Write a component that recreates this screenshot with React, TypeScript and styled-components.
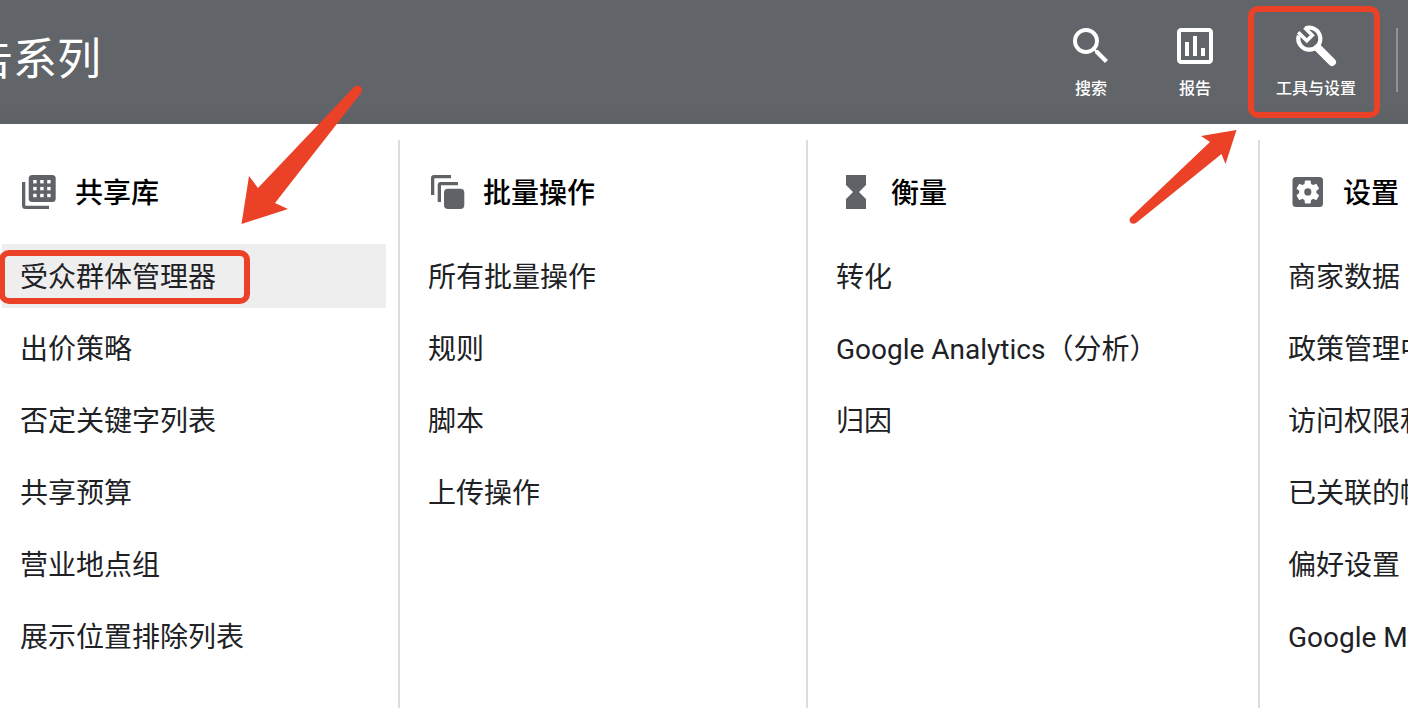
import React from 'react';
import styled, { createGlobalStyle } from 'styled-components';

const GlobalStyle = createGlobalStyle`
  * { box-sizing: border-box; }
  body {
    margin: 0;
    overflow: hidden;
    background: #fff;
    font-family: Roboto, "Noto Sans CJK SC", sans-serif;
  }
`;

const RED = '#eb4126';
const GREY = '#5f6368';

const Page = styled.div`
  position: relative;
  display: flex;
  flex-direction: column;
  min-height: 100vh;
  overflow: hidden;
`;

const Header = styled.header`
  display: flex;
  align-items: center;
  justify-content: space-between;
  height: 124px;
  padding-right: 10px;
  background: linear-gradient(#616469 85%, #5d6164);
  color: #fff;
`;

const Title = styled.h1`
  margin: 0 0 4px -31px;
  font-size: 44px;
  line-height: 64px;
  font-weight: 400;
  white-space: nowrap;
`;

const Tools = styled.nav`
  display: flex;
  align-items: center;
  height: 100%;
`;

const ToolButton = styled.button<{ $wide?: boolean }>`
  position: relative;
  display: flex;
  flex-direction: column;
  align-items: center;
  gap: 4px;
  width: ${(p) => (p.$wide ? 138 : 104)}px;
  height: 100%;
  padding: 22px 0 0;
  border: 0;
  background: none;
  color: inherit;
  font: inherit;
  font-size: 16px;
  line-height: 30px;
  font-weight: 500;
  cursor: pointer;
`;

const Divider = styled.span`
  width: 2px;
  height: 64px;
  margin: 0 0 4px 11px;
  background: #919396;
`;

const Callout = styled.span<{ $inset: string }>`
  position: absolute;
  inset: ${(p) => p.$inset};
  border: 6px solid ${RED};
  border-radius: 10px;
  pointer-events: none;
`;

const Menu = styled.main`
  display: grid;
  flex: 1;
  grid-template-columns: minmax(0, 408fr) minmax(0, 408fr) minmax(0, 452fr) minmax(0, 148fr);
  margin-left: -8px;
  padding-top: 16px;
`;

const Column = styled.section`
  padding: 20px 12px 0 10px;
  border-right: 2px solid #dadce0;
  white-space: nowrap;

  &:last-child {
    border-right: 0;
  }
`;

const Heading = styled.h2`
  display: flex;
  align-items: center;
  gap: 17px;
  height: 64px;
  margin: 0 0 20px;
  padding-left: 16px;
  color: #000;
  font-size: 28px;
  line-height: 40px;
  font-weight: 500;
`;

const HeadingText = styled.span`
  padding-top: 4px;
`;

const List = styled.ul`
  display: flex;
  flex-direction: column;
  gap: 8px;
  margin: 0;
  padding: 0;
  list-style: none;
`;

const Item = styled.a<{ $active?: boolean }>`
  display: flex;
  height: 64px;
  padding-left: 18px;
  background: ${(p) => (p.$active ? '#eee' : 'transparent')};
  color: #202124;
  font-size: 28px;
  line-height: 68px;
  text-decoration: none;
`;

const ItemText = styled.span`
  position: relative;
  height: 100%;
`;

const Arrow = styled.svg<{ $left: number; $top: number }>`
  position: absolute;
  left: ${(p) => p.$left}px;
  top: ${(p) => p.$top}px;
  fill: ${RED};
  pointer-events: none;
`;

const HeadingIcon = styled.svg`
  flex: none;
  width: 40px;
  height: 40px;
  fill: ${GREY};
`;

const SearchIcon = () => (
  <svg width="48" height="48" viewBox="0 0 24 24" fill="currentColor" aria-hidden="true">
    <path d="M15.5 14h-.79l-.28-.27A6.471 6.471 0 0 0 16 9.5 6.5 6.5 0 1 0 9.5 16c1.61 0 3.09-.59 4.23-1.57l.27.28v.79l5 4.99L20.49 19l-4.99-5zm-6 0C7.01 14 5 11.99 5 9.5S7.01 5 9.5 5 14 7.01 14 9.5 11.99 14 9.5 14z" />
  </svg>
);

const ReportIcon = () => (
  <svg width="48" height="48" viewBox="0 0 24 24" fill="currentColor" aria-hidden="true">
    <path d="M19 3H5c-1.1 0-2 .9-2 2v14c0 1.1.9 2 2 2h14c1.1 0 2-.9 2-2V5c0-1.1-.9-2-2-2zm0 16H5V5h14v14zM7 10h2v7H7zM11 7h2v10h-2zM15 13h2v4h-2z" />
  </svg>
);

const WrenchIcon = () => (
  <svg width="48" height="48" viewBox="0 0 48 48" fill="none" stroke="currentColor" aria-hidden="true">
    <path d="M13.5 6.4A11 11 0 1 1 6.8 13.5" strokeWidth="4.2" />
    <path d="M6.2 10.2L14.8 18.8L20.3 13.3L12.5 5.5" strokeWidth="3.6" />
    <path d="M26 26L40 40" strokeWidth="8" strokeLinecap="round" />
  </svg>
);

const LibraryIcon = () => (
  <HeadingIcon viewBox="0 0 40 40" aria-hidden="true">
    <path d="M4 10h3.300v23.700h23.700V37H7.500Q4 37 4 33.500z" />
    <rect x="10.700" y="3" width="27" height="27" rx="3.500" />
    {[0, 1, 2].map((r) =>
      [0, 1, 2].map((c) => (
        <rect key={`${r}${c}`} x={15.2 + c * 7} y={8 + r * 6.9} width="3.400" height="3.400" fill="#fff" />
      )),
    )}
  </HeadingIcon>
);

const BulkIcon = () => (
  <HeadingIcon viewBox="0 0 40 40" aria-hidden="true">
    <path d="M5 23V6q0-3 3-3h17v3.300H8.300V23z" />
    <path d="M11.700 30V13q0-3 3-3H32v3.300H15V30z" />
    <rect x="18" y="16.700" width="20.300" height="20.300" rx="4" />
  </HeadingIcon>
);

const HourglassIcon = () => (
  <HeadingIcon viewBox="0 0 40 40" aria-hidden="true">
    <path d="M12 3h20v10l-7 7l7 7v10H12V27l7-7l-7-7z" />
  </HeadingIcon>
);

const SettingsIcon = () => (
  <HeadingIcon viewBox="0 0 40 40" aria-hidden="true">
    <rect x="6.500" y="5" width="30.500" height="30" rx="3.500" />
    <g transform="translate(7.400 5.500) scale(1.2)">
      <path
        fill="#fff"
        d="M19.14 12.94c.04-.3.06-.61.06-.94 0-.32-.02-.64-.07-.94l2.03-1.58c.18-.14.23-.41.12-.61l-1.92-3.32c-.12-.22-.37-.29-.59-.22l-2.39.96c-.5-.38-1.03-.7-1.62-.94l-.36-2.54c-.04-.24-.24-.41-.48-.41h-3.84c-.24 0-.43.17-.47.41l-.36 2.54c-.59.24-1.13.57-1.62.94l-2.39-.96c-.22-.08-.47 0-.59.22L2.74 8.87c-.12.21-.08.47.12.61l2.03 1.58c-.05.3-.09.63-.09.94s.02.64.07.94l-2.03 1.58c-.18.14-.23.41-.12.61l1.92 3.32c.12.22.37.29.59.22l2.39-.96c.5.38 1.03.7 1.62.94l.36 2.54c.05.24.24.41.48.41h3.84c.24 0 .44-.17.47-.41l.36-2.54c.59-.24 1.13-.56 1.62-.94l2.39.96c.22.08.47 0 .59-.22l1.92-3.32c.12-.22.07-.47-.12-.61z"
      />
      <circle cx="12" cy="12" r="3" />
    </g>
  </HeadingIcon>
);

const columns = [
  {
    title: '共享库',
    Icon: LibraryIcon,
    items: ['受众群体管理器', '出价策略', '否定关键字列表', '共享预算', '营业地点组', '展示位置排除列表'],
  },
  { title: '批量操作', Icon: BulkIcon, items: ['所有批量操作', '规则', '脚本', '上传操作'] },
  { title: '衡量', Icon: HourglassIcon, items: ['转化', 'Google Analytics（分析）', '归因'] },
  {
    title: '设置',
    Icon: SettingsIcon,
    items: ['商家数据', '政策管理中心', '访问权限和安全', '已关联的帐号', '偏好设置', 'Google Merchant Center'],
  },
];

export default function App() {
  return (
    <Page lang="zh-CN">
      <GlobalStyle />
      <Header>
        <Title>告系列</Title>
        <Tools>
          <ToolButton type="button">
            <SearchIcon />
            搜索
          </ToolButton>
          <ToolButton type="button">
            <ReportIcon />
            报告
          </ToolButton>
          <ToolButton type="button" $wide>
            <WrenchIcon />
            工具与设置
            <Callout $inset="6px 5px 6px 1px" />
          </ToolButton>
          <Divider />
        </Tools>
      </Header>
      <Menu>
        {columns.map(({ title, Icon, items }, c) => (
          <Column key={title}>
            <Heading>
              <Icon />
              <HeadingText>{title}</HeadingText>
            </Heading>
            <List>
              {items.map((text, i) => {
                const active = c === 0 && i === 0;
                return (
                  <li key={text}>
                    <Item href="#" $active={active}>
                      <ItemText>
                        {text}
                        {active && <Callout $inset="6px -34px 4px -21px" />}
                      </ItemText>
                    </Item>
                  </li>
                );
              })}
            </List>
          </Column>
        ))}
      </Menu>
      <Arrow $left={240} $top={84} width="124" height="142" viewBox="240 84 124 142" aria-hidden="true">
        <path d="M241.5 224L249 176L258 188L354 87Q358 84 361 87Q363 90 361 93L275 203L288 209Z" />
      </Arrow>
      <Arrow $left={1128} $top={128} width="110" height="98" viewBox="1128 128 110 98" aria-hidden="true">
        <path d="M1236.500 130L1225.500 164L1221.500 154L1136 223Q1132 225 1130 222Q1129 220 1130 218L1210 142L1201 136Z" />
      </Arrow>
    </Page>
  );
}
